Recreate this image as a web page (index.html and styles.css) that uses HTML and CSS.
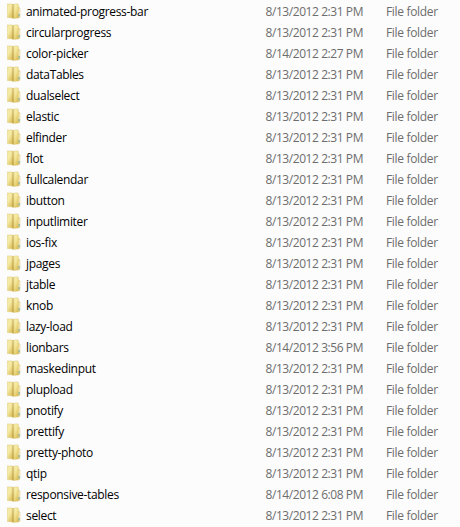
FILE: index.html
```html
<!DOCTYPE html>
<html lang="en">
<head>
<meta charset="utf-8">
<title>Folders</title>
<link rel="stylesheet" href="styles.css">
</head>
<body>
<svg class="defs" aria-hidden="true">
  <defs>
    <linearGradient id="back" x1="0" y1="0" x2=".6" y2="1"><stop offset="0" stop-color="#f3e6a0"/><stop offset=".5" stop-color="#f6eba6"/><stop offset="1" stop-color="#e0c768"/></linearGradient>
    <linearGradient id="mid" x1="0" y1="0" x2="0" y2="1"><stop offset="0" stop-color="#dfcd83"/><stop offset="1" stop-color="#c4a442"/></linearGradient>
    <linearGradient id="front" x1="0" y1="0" x2=".7" y2="1"><stop offset="0" stop-color="#fbf4c0"/><stop offset=".5" stop-color="#f3e595"/><stop offset="1" stop-color="#dcc05a"/></linearGradient>
    <symbol id="folder" viewBox="0 0 14 16">
      <path d="M10.5 4.3h1.6l.8.8v9l-.8.8h-1.6z" fill="#f0e09a" stroke="#d8c06c" stroke-width=".5"/>
      <path d="M11.4 6h.9v5h-.9z" fill="#fdfdf6"/>
      <path d="M11.3 11h1.2v2.6h-1.2z" fill="#4fa9cf"/>
      <path d="M.3.9h4.9v14L.3 14.5z" fill="url(#back)" stroke="#dfcc80" stroke-width=".5"/>
      <path d="M5 .9h3v13.8l-2 .9-1-.5z" fill="url(#mid)"/>
      <path d="M6.9 1.5l.5-.6h3.6l.4.5v13l-.5.5-4.6.7 .6-1.6z" fill="url(#front)" stroke="#d7c06c" stroke-width=".4"/>
    </symbol>
  </defs>
</svg>
<ul class="list">
  <li class="row"><svg class="icon"><use href="#folder"/></svg><span class="name">animated-progress-bar</span><span class="date">8/13/2012 2:31 PM</span><span class="type">File folder</span></li>
  <li class="row"><svg class="icon"><use href="#folder"/></svg><span class="name">circularprogress</span><span class="date">8/13/2012 2:31 PM</span><span class="type">File folder</span></li>
  <li class="row"><svg class="icon"><use href="#folder"/></svg><span class="name">color-picker</span><span class="date">8/14/2012 2:27 PM</span><span class="type">File folder</span></li>
  <li class="row"><svg class="icon"><use href="#folder"/></svg><span class="name">dataTables</span><span class="date">8/13/2012 2:31 PM</span><span class="type">File folder</span></li>
  <li class="row"><svg class="icon"><use href="#folder"/></svg><span class="name">dualselect</span><span class="date">8/13/2012 2:31 PM</span><span class="type">File folder</span></li>
  <li class="row"><svg class="icon"><use href="#folder"/></svg><span class="name">elastic</span><span class="date">8/13/2012 2:31 PM</span><span class="type">File folder</span></li>
  <li class="row"><svg class="icon"><use href="#folder"/></svg><span class="name">elfinder</span><span class="date">8/13/2012 2:31 PM</span><span class="type">File folder</span></li>
  <li class="row"><svg class="icon"><use href="#folder"/></svg><span class="name">flot</span><span class="date">8/13/2012 2:31 PM</span><span class="type">File folder</span></li>
  <li class="row"><svg class="icon"><use href="#folder"/></svg><span class="name">fullcalendar</span><span class="date">8/13/2012 2:31 PM</span><span class="type">File folder</span></li>
  <li class="row"><svg class="icon"><use href="#folder"/></svg><span class="name">ibutton</span><span class="date">8/13/2012 2:31 PM</span><span class="type">File folder</span></li>
  <li class="row"><svg class="icon"><use href="#folder"/></svg><span class="name">inputlimiter</span><span class="date">8/13/2012 2:31 PM</span><span class="type">File folder</span></li>
  <li class="row"><svg class="icon"><use href="#folder"/></svg><span class="name">ios-fix</span><span class="date">8/13/2012 2:31 PM</span><span class="type">File folder</span></li>
  <li class="row"><svg class="icon"><use href="#folder"/></svg><span class="name">jpages</span><span class="date">8/13/2012 2:31 PM</span><span class="type">File folder</span></li>
  <li class="row"><svg class="icon"><use href="#folder"/></svg><span class="name">jtable</span><span class="date">8/13/2012 2:31 PM</span><span class="type">File folder</span></li>
  <li class="row"><svg class="icon"><use href="#folder"/></svg><span class="name">knob</span><span class="date">8/13/2012 2:31 PM</span><span class="type">File folder</span></li>
  <li class="row"><svg class="icon"><use href="#folder"/></svg><span class="name">lazy-load</span><span class="date">8/13/2012 2:31 PM</span><span class="type">File folder</span></li>
  <li class="row"><svg class="icon"><use href="#folder"/></svg><span class="name">lionbars</span><span class="date">8/14/2012 3:56 PM</span><span class="type">File folder</span></li>
  <li class="row"><svg class="icon"><use href="#folder"/></svg><span class="name">maskedinput</span><span class="date">8/13/2012 2:31 PM</span><span class="type">File folder</span></li>
  <li class="row"><svg class="icon"><use href="#folder"/></svg><span class="name">plupload</span><span class="date">8/13/2012 2:31 PM</span><span class="type">File folder</span></li>
  <li class="row"><svg class="icon"><use href="#folder"/></svg><span class="name">pnotify</span><span class="date">8/13/2012 2:31 PM</span><span class="type">File folder</span></li>
  <li class="row"><svg class="icon"><use href="#folder"/></svg><span class="name">prettify</span><span class="date">8/13/2012 2:31 PM</span><span class="type">File folder</span></li>
  <li class="row"><svg class="icon"><use href="#folder"/></svg><span class="name">pretty-photo</span><span class="date">8/13/2012 2:31 PM</span><span class="type">File folder</span></li>
  <li class="row"><svg class="icon"><use href="#folder"/></svg><span class="name">qtip</span><span class="date">8/13/2012 2:31 PM</span><span class="type">File folder</span></li>
  <li class="row"><svg class="icon"><use href="#folder"/></svg><span class="name">responsive-tables</span><span class="date">8/14/2012 6:08 PM</span><span class="type">File folder</span></li>
  <li class="row"><svg class="icon"><use href="#folder"/></svg><span class="name">select</span><span class="date">8/13/2012 2:31 PM</span><span class="type">File folder</span></li>
</ul>
</body>
</html>
```
FILE: styles.css
```css
body {
  margin: 0;
  background: #fcfcfc;
  font: 12px/21px "Open Sans", "Noto Sans", sans-serif;
  color: #000;
}
.defs {
  display: block;
  width: 0;
  height: 0;
}
.list {
  margin: 0;
  padding: 1px 0 0 7px;
  list-style: none;
}
.row {
  display: grid;
  grid-template-columns: 19px 239.5px 120.5px 1fr;
  align-items: center;
  height: 21px;
  white-space: nowrap;
}
.icon {
  align-self: start;
  width: 14px;
  height: 16px;
  margin-top: 2px;
}
.name {
  letter-spacing: -0.33px;
}
.date,
.type {
  color: #6d6d6d;
}
.date {
  letter-spacing: -0.43px;
}
.type {
  letter-spacing: -0.32px;
}
```
